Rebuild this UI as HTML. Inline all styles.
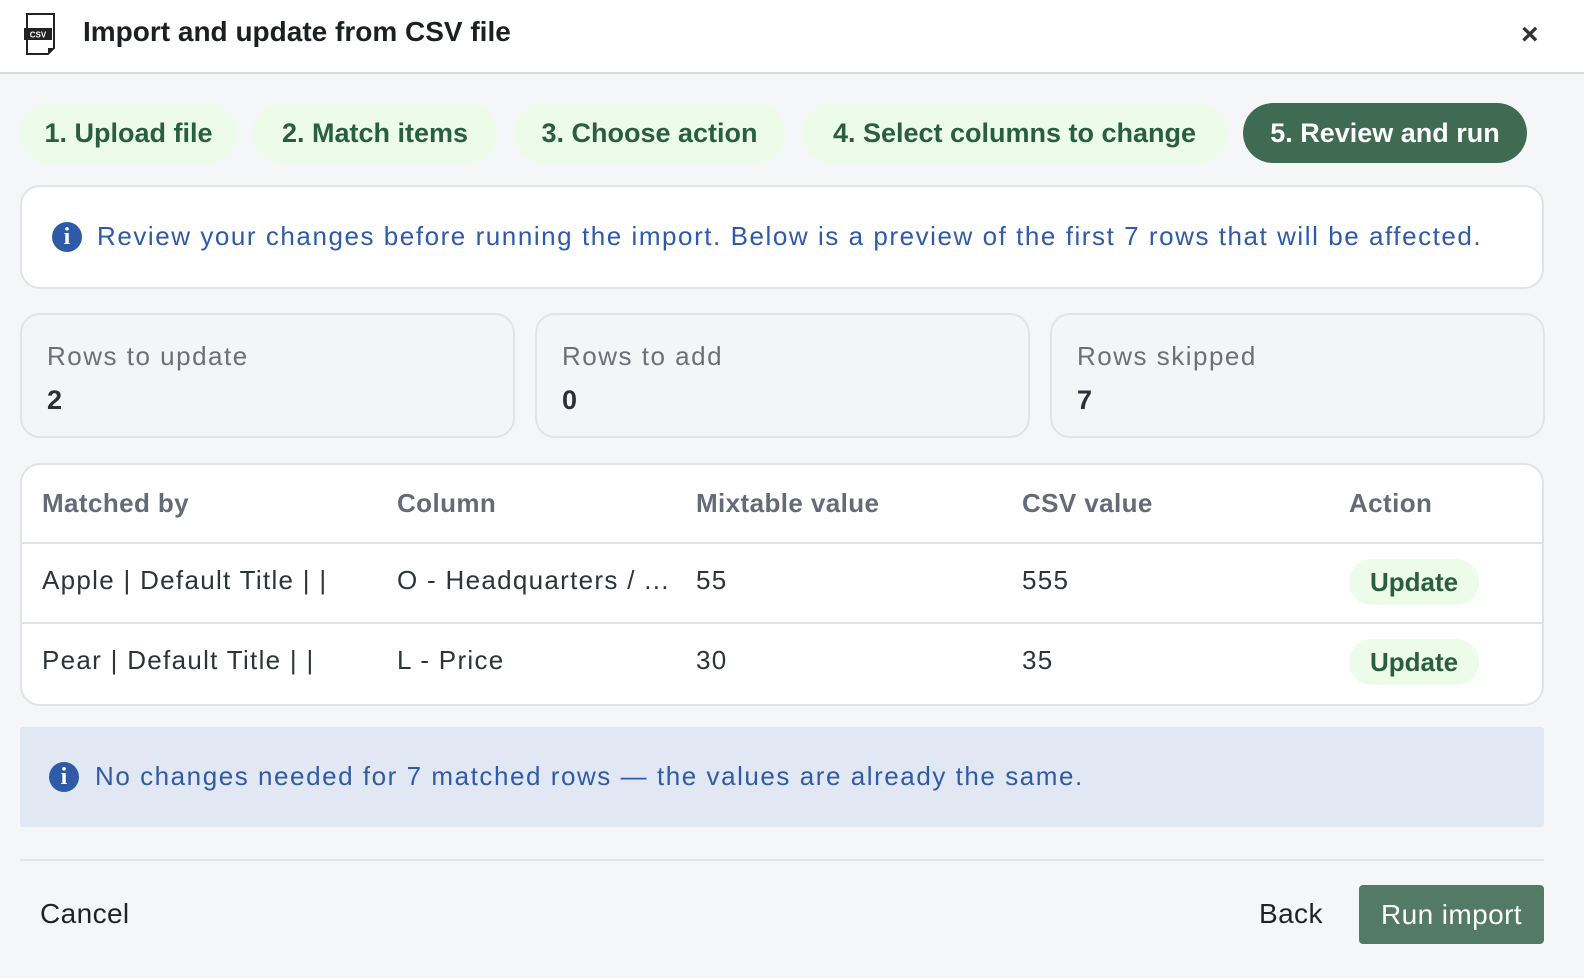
<!DOCTYPE html>
<html><head><meta charset="utf-8"><style>
*{box-sizing:border-box;margin:0;padding:0}
body{width:1584px;height:978px;background:#f5f6f8;font-family:"Liberation Sans",sans-serif;position:relative;overflow:hidden;color:#1f2328}
.a{position:absolute;white-space:nowrap}
.hdr{left:0;top:0;width:1584px;height:74px;background:#fff;border-bottom:2px solid #d9dadd}
.pill{top:103px;height:60px;border-radius:30px;background:#edfbe9;color:#2a5e41;font-size:27px;font-weight:bold;line-height:60px;text-align:center}
.pill.on{background:#3f6b52;color:#fff}
.box{background:#fff;border:2px solid #e2e3e6;border-radius:20px}
.stat{top:313px;height:125px;width:495px;background:#f4f5f6;border:2px solid #e2e3e6;border-radius:20px}
.stat .l{position:absolute;left:25px;top:26px;font-size:26px;color:#6b7078;letter-spacing:1.5px}
.stat .v{position:absolute;left:25px;top:70px;font-size:27px;font-weight:bold;color:#2a2f3a}
.th{font-size:26px;font-weight:bold;color:#646b78;top:488px;letter-spacing:0.4px}
.td{font-size:26px;color:#2d323c;letter-spacing:1.3px}
.badge{left:1349px;width:130px;height:46px;border-radius:23px;background:#edfbe9;color:#2a5e41;font-weight:bold;font-size:26px;line-height:46px;text-align:center}
.info{width:30px;height:30px;border-radius:50%;background:#2f5aa8;color:#fff;font-family:"Liberation Serif",serif;font-weight:bold;font-size:24px;line-height:30px;text-align:center}
.bt{font-size:26px;color:#2f5aa8;letter-spacing:1.55px}
</style></head><body>
<div class="a hdr"></div>
<svg class="a" style="left:24px;top:12px" width="34" height="44" viewBox="0 0 34 44"><path d="M3 2h27v34l-6 6H3z" fill="#fff" stroke="#222" stroke-width="2"/><path d="M24 42v-6h6" fill="#222"/><rect x="0" y="16" width="28" height="12" fill="#222"/><text x="14" y="25.5" font-size="8" fill="#fff" text-anchor="middle" font-family="Liberation Sans" font-weight="bold">CSV</text></svg>
<div class="a" style="left:83px;top:16px;font-size:28px;font-weight:bold;color:#1c1f24">Import and update from CSV file</div>
<div class="a" style="left:1521px;top:18px;font-size:30px;color:#333;font-weight:bold">×</div>

<div class="a pill" style="left:20px;width:217px">1. Upload file</div>
<div class="a pill" style="left:253px;width:244px">2. Match items</div>
<div class="a pill" style="left:514px;width:271px">3. Choose action</div>
<div class="a pill" style="left:802px;width:425px">4. Select columns to change</div>
<div class="a pill on" style="left:1243px;width:284px">5. Review and run</div>

<div class="a box" style="left:20px;top:185px;width:1524px;height:104px"></div>
<div class="a info" style="left:52px;top:222px">i</div>
<div class="a bt" style="left:97px;top:221px">Review your changes before running the import. Below is a preview of the first 7 rows that will be affected.</div>

<div class="a stat" style="left:20px"><div class="l">Rows to update</div><div class="v">2</div></div>
<div class="a stat" style="left:535px"><div class="l">Rows to add</div><div class="v">0</div></div>
<div class="a stat" style="left:1050px"><div class="l">Rows skipped</div><div class="v">7</div></div>

<div class="a box" style="left:20px;top:463px;width:1524px;height:243px"></div>
<div class="a" style="left:22px;top:542px;width:1520px;height:2px;background:#e2e3e6"></div>
<div class="a" style="left:22px;top:622px;width:1520px;height:2px;background:#e2e3e6"></div>
<div class="a th" style="left:42px">Matched by</div>
<div class="a th" style="left:397px">Column</div>
<div class="a th" style="left:696px">Mixtable value</div>
<div class="a th" style="left:1022px">CSV value</div>
<div class="a th" style="left:1349px">Action</div>
<div class="a td" style="left:42px;top:565px">Apple | Default Title | |</div>
<div class="a td" style="left:397px;top:565px">O - Headquarters / ...</div>
<div class="a td" style="left:696px;top:565px">55</div>
<div class="a td" style="left:1022px;top:565px">555</div>
<div class="a badge" style="top:559px">Update</div>
<div class="a td" style="left:42px;top:645px">Pear | Default Title | |</div>
<div class="a td" style="left:397px;top:645px">L - Price</div>
<div class="a td" style="left:696px;top:645px">30</div>
<div class="a td" style="left:1022px;top:645px">35</div>
<div class="a badge" style="top:639px">Update</div>

<div class="a" style="left:20px;top:727px;width:1524px;height:100px;background:#e1e8f3;border-radius:3px"></div>
<div class="a info" style="left:49px;top:762px">i</div>
<div class="a bt" style="left:95px;top:761px">No changes needed for 7 matched rows — the values are already the same.</div>

<div class="a" style="left:20px;top:859px;width:1524px;height:2px;background:#e2e3e6"></div>
<div class="a" style="left:40px;top:898px;font-size:28px;color:#1f2328;letter-spacing:0.4px">Cancel</div>
<div class="a" style="left:1259px;top:898px;font-size:28px;color:#1f2328;letter-spacing:0.4px">Back</div>
<div class="a" style="left:1359px;top:885px;width:185px;height:59px;background:#527a64;border-radius:4px;color:#fff;font-size:28px;line-height:59px;text-align:center;letter-spacing:0.4px">Run import</div>
</body></html>
